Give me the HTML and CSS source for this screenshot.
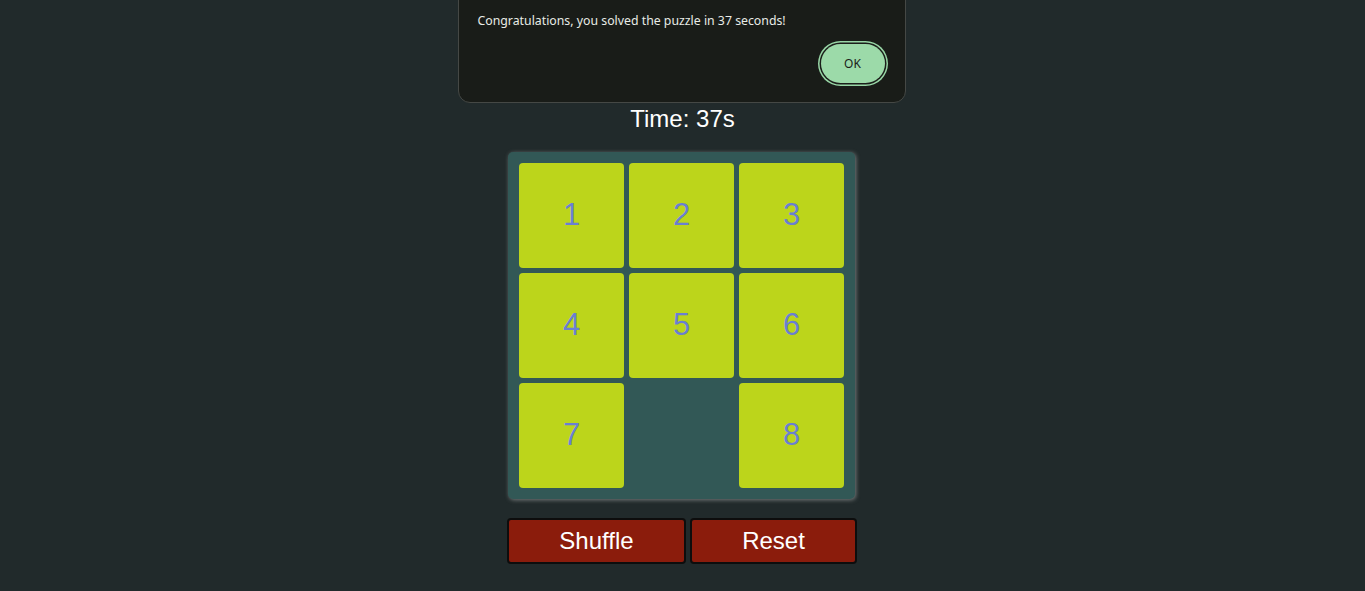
FILE: index.html
```html
<!DOCTYPE html>
<html lang="en">
<head>
<meta charset="utf-8">
<title>Sliding Puzzle</title>
<link rel="stylesheet" href="styles.css">
</head>
<body>
<main class="game">
  <div class="timer">Time: 37s</div>
  <div class="board">
    <div class="tile">1</div>
    <div class="tile">2</div>
    <div class="tile">3</div>
    <div class="tile">4</div>
    <div class="tile">5</div>
    <div class="tile">6</div>
    <div class="tile">7</div>
    <div class="empty"></div>
    <div class="tile">8</div>
  </div>
  <div class="controls">
    <button class="btn btn-shuffle">Shuffle</button>
    <button class="btn btn-reset">Reset</button>
  </div>
</main>
<div class="dialog" role="alertdialog">
  <p class="dialog-msg">Congratulations, you solved the puzzle in 37 seconds!</p>
  <div class="dialog-actions">
    <button class="ok-btn">OK</button>
  </div>
</div>
</body>
</html>
```
FILE: styles.css
```css
html, body {
  margin: 0;
  padding: 0;
}
body {
  background: #212a2b;
  font-family: "Liberation Sans", Arial, sans-serif;
  color: #ffffff;
  height: 591px;
  overflow: hidden;
}
.game {
  display: flex;
  flex-direction: column;
  align-items: center;
  padding-top: 105px;
}
.timer {
  font-size: 24px;
  line-height: 28px;
  height: 28px;
}
.board {
  margin-top: 19px;
  box-sizing: border-box;
  width: 347px;
  height: 347px;
  padding: 11px;
  background: #325856;
  border-radius: 5px;
  box-shadow: 1px 1px 4px rgba(190, 190, 190, 0.55);
  display: grid;
  grid-template-columns: repeat(3, 105px);
  grid-template-rows: repeat(3, 105px);
  gap: 5px;
  margin-left: -2px;
}
.tile {
  background: #bcd51b;
  border-radius: 4px;
  color: #6a7fd3;
  font-size: 31px;
  display: flex;
  align-items: center;
  justify-content: center;
  padding-bottom: 2px;
  box-sizing: border-box;
}
.controls {
  margin-top: 19px;
  margin-left: -1px;
  display: flex;
  gap: 4px;
}
.btn {
  font-family: "Liberation Sans", Arial, sans-serif;
  font-size: 24px;
  line-height: 28px;
  color: #ffffff;
  background: #8b1c0c;
  border: 2px solid #0d0d0d;
  border-radius: 4px;
  padding: 7px 50px;
  margin: 0;
}
.btn-shuffle {
  width: 179px;
}
.btn-reset {
  width: 167px;
}
.dialog {
  position: absolute;
  top: -20px;
  left: calc(50% - 225px);
  width: 448px;
  box-sizing: border-box;
  background: #191c18;
  border: 1px solid #454845;
  border-radius: 12px;
  padding: 32px 19px 19px 19px;
  font-family: "Noto Sans", "Open Sans", sans-serif;
  color: #e8ebe6;
}
.dialog-msg {
  margin: 0;
  font-size: 12.3px;
  line-height: 16px;
}
.dialog-actions {
  display: flex;
  justify-content: flex-end;
  margin-top: 15px;
}
.ok-btn {
  width: 64px;
  height: 39px;
  margin: 0;
  border: none;
  border-radius: 20px;
  background: #9cdaa9;
  color: #1b1e1a;
  font-family: "Noto Sans", "Open Sans", sans-serif;
  font-size: 12px;
  box-shadow: 0 0 0 1.5px #1b1e1a, 0 0 0 3px #98d6a6;
  position: relative;
  right: 1px;
}
```
